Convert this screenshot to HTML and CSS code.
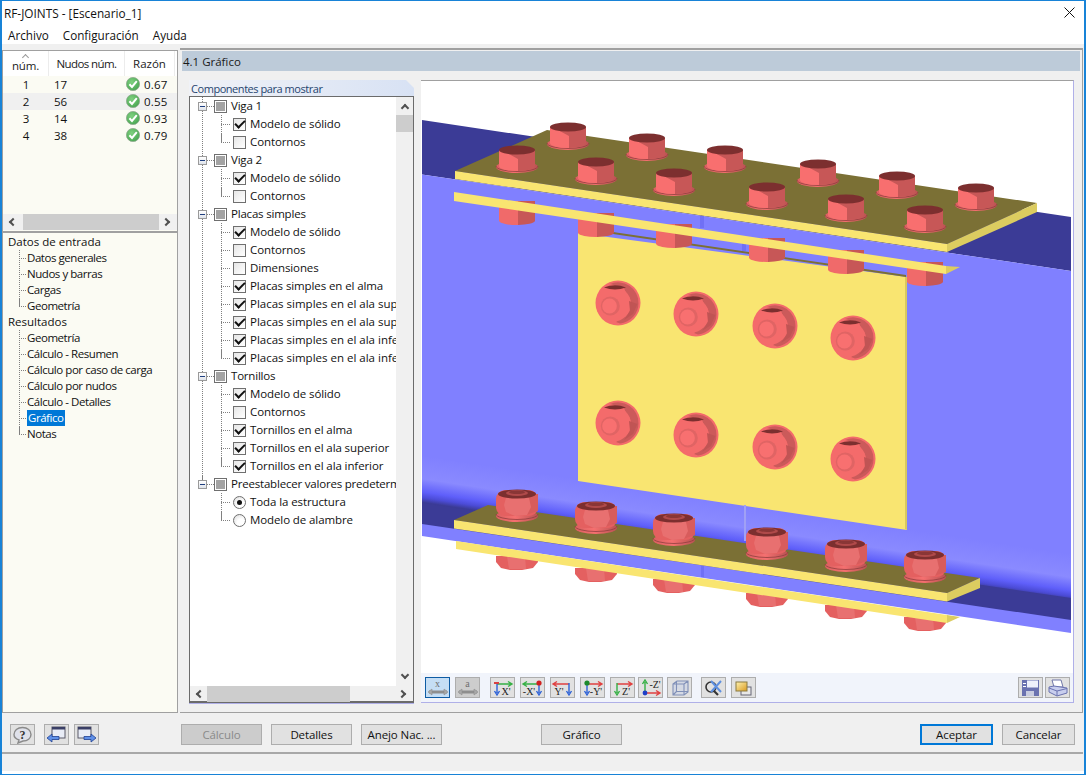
FILE: index.html
```html
<!DOCTYPE html>
<html lang="es">
<head>
<meta charset="utf-8">
<title>RF-JOINTS - [Escenario_1]</title>
<link rel="stylesheet" href="styles.css">
</head>
<body>
<svg class="defs" width="0" height="0">
  <defs>
    <linearGradient id="washer" x1="0" x2="1" y1="0" y2="0">
      <stop offset="0" stop-color="#d95f5f"/><stop offset=".45" stop-color="#f57070"/><stop offset="1" stop-color="#b95252"/>
    </linearGradient>
    <linearGradient id="webshade" gradientUnits="userSpaceOnUse" x1="750" y1="505" x2="743" y2="551">
      <stop offset="0" stop-color="#8080ff"/><stop offset=".5" stop-color="#8a8aff"/><stop offset=".78" stop-color="#5f5ffa"/><stop offset=".9" stop-color="#4c4cd8"/><stop offset="1" stop-color="#3b3b96"/>
    </linearGradient>
    <radialGradient id="okball" cx=".4" cy=".35" r=".8">
      <stop offset="0" stop-color="#7fd07f"/><stop offset="1" stop-color="#3f9f4a"/>
    </radialGradient>
    <linearGradient id="gold" x1="0" x2="1" y1="0" y2="1">
      <stop offset="0" stop-color="#fff3b0"/><stop offset="1" stop-color="#d99a20"/>
    </linearGradient>
    <g id="ok">
      <circle cx="7" cy="7" r="6.6" fill="url(#okball)" stroke="#8fa98f" stroke-width=".8"/>
      <path d="M3.4 7.2 6 10 10.800 4.200" fill="none" stroke="#fff" stroke-width="2"/>
    </g>
    <g id="bolt">
      <ellipse cx="0" cy="17" rx="21" ry="6" fill="url(#washer)"/>
      <path d="M-21 16A21 5.500 0 0 0 21 16" fill="none" stroke="#8f3f3f" stroke-width=".8"/>
      <path d="M-18 0V16A18 5 0 0 0 1 21V0Z" fill="#f86f6f"/>
      <path d="M1 0V21A18 5 0 0 0 18 16V0Z" fill="#c75757"/>
      <path d="M-10 3 1 9V3Z" fill="#c75757"/>
      <ellipse cx="0" cy="0" rx="18" ry="4.600" fill="#7c2f2f"/>
    </g>
    <g id="stub">
      <path d="M-18 -24V-4A18 4.500 0 0 0 1 0V-24Z" fill="#f06a6a"/>
      <path d="M1 -24V0A18 4.500 0 0 0 18 -4V-24Z" fill="#c75757"/>
    </g>
    <g id="nut">
      <ellipse cx="0" cy="27" rx="21" ry="6" fill="url(#washer)"/>
      <path d="M-21 25A21 5.500 0 0 0 21 25" fill="none" stroke="#8f3f3f" stroke-width=".8"/>
      <rect x="-21" y="1" width="42" height="26" rx="9" fill="#e46060"/>
      <path d="M9 5H21V22L9 26Z" fill="#d85c5c"/>
      <path d="M-11 9 1 6 12 9 14 18 10 26 -2 27 -11 23 -13 16Z" fill="#e87070"/>
      <ellipse cx="0" cy="5" rx="19" ry="4.600" fill="#7c2f2f"/>
      <ellipse cx="0" cy="4" rx="11" ry="3" fill="#b04a4a"/>
      <ellipse cx="0" cy="3.200" rx="8" ry="1.800" fill="#8a3636"/>
    </g>
    <g id="nutstub">
      <path d="M-21 -14H21V-8L16 -2 5 0H-7L-16 -2 -21 -8Z" fill="#e46060"/>
      <path d="M-10 -14H8L9 -1H-8Z" fill="#e87070"/>
    </g>
    <g id="front">
      <circle cx="0" cy="0" r="22.500" fill="#f46b6b"/>
      <path d="M-8 -19A20.500 20.500 0 0 1 20.500 0 20.500 20.500 0 0 1 2 20.500L-2 19 9 11 10 -5 6 -15Z" fill="#cb5a5a"/>
      <circle cx="-4.500" cy="1" r="17.500" fill="#f46b6b"/>
      <path d="M11 -2 19.500 1 15 11 6 17 12 8Z" fill="#c05454"/>
      <path d="M-14 -15.500Q-3 -20 8 -15.500 -3 -11.500 -14 -15.500Z" fill="#7c2f2f"/>
      <circle cx="-7.700" cy="3" r="9.500" fill="#e06464"/>
      <circle cx="-8.500" cy="3" r="7.400" fill="#f87070"/>
    </g>
    <g id="dblarrow">
      <path d="M3 13H21" stroke="#8e8e8e" stroke-width="3"/>
      <path d="M6 10 2 13 6 16ZM18 10 22 13 18 16Z" fill="#a8a8a8" stroke="#8e8e8e" stroke-width=".6"/>
    </g>
  </defs>
</svg>

<div class="window">
  <header class="titlebar">
    <span class="title">RF-JOINTS - [Escenario_1]</span>
    <svg class="close" width="11" height="11" viewBox="0 0 11 11"><path d="M.5.5 10.500 10.500M10.500.5.5 10.500" stroke="#111" stroke-width="1"/></svg>
  </header>
  <nav class="menubar"><span>Archivo</span><span>Configuración</span><span>Ayuda</span></nav>

  <div class="app">
    <div class="workarea">
      <aside class="left">
        <section class="table-pane">
          <div class="t-head">
            <div class="th th-num"><span class="sort"></span>núm.</div>
            <div class="th th-node">Nudos núm.</div>
            <div class="th th-ratio">Razón</div>
          </div>
          <div class="t-rows">
            <div class="t-row"><span class="c-num">1</span><span class="c-node">17</span><svg class="okicon" width="14" height="14"><use href="#ok"/></svg><span class="c-val">0.67</span></div>
            <div class="t-row selected"><span class="c-num">2</span><span class="c-node">56</span><svg class="okicon" width="14" height="14"><use href="#ok"/></svg><span class="c-val">0.55</span></div>
            <div class="t-row"><span class="c-num">3</span><span class="c-node">14</span><svg class="okicon" width="14" height="14"><use href="#ok"/></svg><span class="c-val">0.93</span></div>
            <div class="t-row"><span class="c-num">4</span><span class="c-node">38</span><svg class="okicon" width="14" height="14"><use href="#ok"/></svg><span class="c-val">0.79</span></div>
          </div>
          <div class="hscroll hscroll-table">
            <span class="arrow a-left"></span><span class="thumb thumb-table"></span><span class="arrow a-right"></span>
          </div>
        </section>
        <section class="nav-pane">
          <div class="nav-root">Datos de entrada</div>
          <div class="nav-item">Datos generales</div>
          <div class="nav-item">Nudos y barras</div>
          <div class="nav-item">Cargas</div>
          <div class="nav-item last">Geometría</div>
          <div class="nav-root">Resultados</div>
          <div class="nav-item">Geometría</div>
          <div class="nav-item">Cálculo - Resumen</div>
          <div class="nav-item">Cálculo por caso de carga</div>
          <div class="nav-item">Cálculo por nudos</div>
          <div class="nav-item">Cálculo - Detalles</div>
          <div class="nav-item"><span class="nav-sel">Gráfico</span></div>
          <div class="nav-item last">Notas</div>
        </section>
      </aside>

      <main class="right">
        <div class="section-head">4.1 Gráfico</div>
        <div class="content">
          <div class="components">
            <div class="comp-label">Componentes para mostrar</div>
            <div class="comp-box">
              <div class="comp-top">
                <div class="tree">
                  <div class="g"><span class="exp"></span><span class="dots"></span><span class="cb grp"></span>Viga 1</div>
                  <div class="i"><span class="cb on"></span>Modelo de sólido</div>
                  <div class="i end"><span class="cb"></span>Contornos</div>
                  <div class="g"><span class="exp"></span><span class="dots"></span><span class="cb grp"></span>Viga 2</div>
                  <div class="i"><span class="cb on"></span>Modelo de sólido</div>
                  <div class="i end"><span class="cb"></span>Contornos</div>
                  <div class="g"><span class="exp"></span><span class="dots"></span><span class="cb grp"></span>Placas simples</div>
                  <div class="i"><span class="cb on"></span>Modelo de sólido</div>
                  <div class="i"><span class="cb"></span>Contornos</div>
                  <div class="i"><span class="cb"></span>Dimensiones</div>
                  <div class="i"><span class="cb on"></span>Placas simples en el alma</div>
                  <div class="i wide"><span class="cb on"></span>Placas simples en el ala superior</div>
                  <div class="i wide"><span class="cb on"></span>Placas simples en el ala superior</div>
                  <div class="i wide"><span class="cb on"></span>Placas simples en el ala inferior</div>
                  <div class="i wide end"><span class="cb on"></span>Placas simples en el ala inferior</div>
                  <div class="g"><span class="exp"></span><span class="dots"></span><span class="cb grp"></span>Tornillos</div>
                  <div class="i"><span class="cb on"></span>Modelo de sólido</div>
                  <div class="i"><span class="cb"></span>Contornos</div>
                  <div class="i"><span class="cb on"></span>Tornillos en el alma</div>
                  <div class="i"><span class="cb on"></span>Tornillos en el ala superior</div>
                  <div class="i end"><span class="cb on"></span>Tornillos en el ala inferior</div>
                  <div class="g lastg"><span class="exp"></span><span class="dots"></span><span class="cb grp"></span>Preestablecer valores predeterminados</div>
                  <div class="i nov"><span class="rb on"></span>Toda la estructura</div>
                  <div class="i nov end"><span class="rb"></span>Modelo de alambre</div>
                </div>
                <div class="vscroll">
                  <span class="arrow a-up"></span><span class="vthumb"></span><span class="vspace"></span><span class="arrow a-down"></span>
                </div>
              </div>
              <div class="hscroll hscroll-tree">
                <span class="arrow a-left"></span><span class="thumb thumb-tree"></span><span class="arrow a-right"></span>
              </div>
            </div>
          </div>

          <div class="canvas">
            <svg class="scene" width="652" height="592" viewBox="421 81 652 592">
              <rect x="421" y="81" width="652" height="592" fill="#fff"/>
              <polygon points="422,120 1071,217 1071,271 422,174.500" fill="#3b3b96"/>
              <polygon points="422,174.500 1071,271 1071,625 422,530" fill="#8080ff"/>
              <polygon points="422,456 1071,553 1071,600 422,505" fill="url(#webshade)"/>
              <polygon points="422,503 1071,598 1071,621 422,525" fill="#3b3b96"/>
              <polygon points="422,524 1071,620 1071,633 422,536" fill="#8080ff"/>

              <polygon points="578,233 907,277 907,530 578,481" fill="#f9e571"/>
              <polygon points="905,277 907,277 907,530 905,529" fill="#d8c85e"/>
              <polygon points="613,232 906,275 906,277 613,234" fill="#7b7035"/>
              <rect x="700" y="216" width="4" height="12" fill="#7070f5"/>
              <rect x="742" y="243" width="4" height="8" fill="#7070f5"/>
              <rect x="744" y="505" width="2" height="36" fill="#a0a0f5"/>
              <rect x="701" y="566" width="3" height="11" fill="#7070f5"/>

              <use href="#stub" x="517" y="225"/>
              <use href="#stub" x="596" y="237"/>
              <use href="#stub" x="674" y="248"/>
              <use href="#stub" x="767" y="262"/>
              <use href="#stub" x="846" y="274"/>
              <use href="#stub" x="925" y="286"/>

              <polygon points="454,192 946,266 946,274 454,201" fill="#f9e571"/>
              <polygon points="946,266 960,267 946,274" fill="#dccc60"/>

              <polygon points="455,171 547,130 1037,203 947,244" fill="#7b7035"/>
              <polygon points="455,171 947,244 947,252 455,179" fill="#f9e571"/>
              <polygon points="947,244 1037,203 1037,212 947,252" fill="#dccc60"/>

              <use href="#bolt" x="568" y="127"/>
              <use href="#bolt" x="647" y="138"/>
              <use href="#bolt" x="725" y="150"/>
              <use href="#bolt" x="818" y="164"/>
              <use href="#bolt" x="897" y="176"/>
              <use href="#bolt" x="976" y="188"/>
              <use href="#bolt" x="517" y="150"/>
              <use href="#bolt" x="596" y="162"/>
              <use href="#bolt" x="674" y="173"/>
              <use href="#bolt" x="767" y="187"/>
              <use href="#bolt" x="846" y="199"/>
              <use href="#bolt" x="925" y="210"/>

              <use href="#front" x="618" y="303"/>
              <use href="#front" x="696" y="314"/>
              <use href="#front" x="775" y="326"/>
              <use href="#front" x="853" y="338"/>
              <use href="#front" x="618" y="423"/>
              <use href="#front" x="696" y="435"/>
              <use href="#front" x="775" y="447"/>
              <use href="#front" x="853" y="459"/>

              <use href="#nutstub" x="517" y="570"/>
              <use href="#nutstub" x="596" y="582"/>
              <use href="#nutstub" x="674" y="593"/>
              <use href="#nutstub" x="767" y="607"/>
              <use href="#nutstub" x="846" y="619"/>
              <use href="#nutstub" x="925" y="631"/>

              <polygon points="456,541 947,615 947,623 456,549" fill="#f9e571"/>
              <polygon points="947,615 960,617 947,623" fill="#dccc60"/>

              <polygon points="454,520 488,505 980,578 947,593" fill="#7b7035"/>
              <polygon points="454,520 947,593 947,601.500 454,528.500" fill="#f9e571"/>
              <polygon points="947,593 980,578 980,588 947,601.500" fill="#dccc60"/>

              <use href="#nut" x="517" y="489"/>
              <use href="#nut" x="596" y="501"/>
              <use href="#nut" x="674" y="513"/>
              <use href="#nut" x="767" y="527"/>
              <use href="#nut" x="846" y="539"/>
              <use href="#nut" x="925" y="550"/>
            </svg>

            <div class="viewbar">
              <button class="tb active"><svg width="23" height="18" viewBox="0 0 23 18"><text x="11.500" y="8" class="ic-t">x</text><use href="#dblarrow"/></svg></button>
              <button class="tb disabled"><svg width="23" height="18" viewBox="0 0 23 18"><text x="11.500" y="8" class="ic-t">a</text><use href="#dblarrow"/></svg></button>
              <button class="tb sep"><svg width="23" height="18" viewBox="0 0 23 18"><path d="M6 5H20M17 2.500 21 5 17 7.500" fill="none" stroke="#35b045" stroke-width="1.400"/><path d="M6 4V14M3.500 12 6 16 8.500 12" fill="none" stroke="#2d62d8" stroke-width="1.400"/><rect x="3" y="3" width="5" height="2" fill="#d84040"/><text x="15" y="16" class="ic-a">X'</text></svg></button>
              <button class="tb"><svg width="23" height="18" viewBox="0 0 23 18"><path d="M17 5H3M6 2.500 2 5 6 7.500" fill="none" stroke="#35b045" stroke-width="1.400"/><path d="M18 5V14M15.500 12 18 16 20.500 12" fill="none" stroke="#2d62d8" stroke-width="1.400"/><circle cx="18" cy="4" r="2.600" fill="#d02020"/><text x="8" y="16" class="ic-a">-X'</text></svg></button>
              <button class="tb"><svg width="23" height="18" viewBox="0 0 23 18"><path d="M18 5H3M6 2.500 2 5 6 7.500" fill="none" stroke="#e04040" stroke-width="1.400"/><path d="M18 4V14M15.500 12 18 16 20.500 12" fill="none" stroke="#2d62d8" stroke-width="1.400"/><text x="8" y="16" class="ic-a">Y'</text></svg></button>
              <button class="tb"><svg width="23" height="18" viewBox="0 0 23 18"><path d="M6 5H20M17 2.500 21 5 17 7.500" fill="none" stroke="#e04040" stroke-width="1.400"/><path d="M6 5V14M3.500 12 6 16 8.500 12" fill="none" stroke="#2d62d8" stroke-width="1.400"/><circle cx="6" cy="4" r="2.600" fill="#1c8a2c"/><text x="15" y="16" class="ic-a">-Y'</text></svg></button>
              <button class="tb"><svg width="23" height="18" viewBox="0 0 23 18"><path d="M6 5H20M17 2.500 21 5 17 7.500" fill="none" stroke="#e04040" stroke-width="1.400"/><path d="M6 4V14M3.500 12 6 16 8.500 12" fill="none" stroke="#35b045" stroke-width="1.400"/><text x="15" y="16" class="ic-a">Z'</text></svg></button>
              <button class="tb narrow"><svg width="23" height="18" viewBox="0 0 23 18"><path d="M6 14V3M3.500 5 6 1 8.500 5" fill="none" stroke="#35b045" stroke-width="1.400"/><path d="M6 14H20M17 11.500 21 14 17 16.500" fill="none" stroke="#e04040" stroke-width="1.400"/><circle cx="6" cy="14" r="2.400" fill="#1f3fc8"/><text x="16" y="9" class="ic-a">-Z'</text></svg></button>
              <button class="tb"><svg width="23" height="18" viewBox="0 0 23 18"><path d="M5 5 9 2H20V13L16 16H5ZM5 5H16V16M16 5 20 2M8.500 2.500V12.500H19.500M8.500 12.500 5 16" fill="#c8d2e8" fill-opacity=".5" stroke="#8090b8" stroke-width="1.100"/></svg></button>
              <button class="tb sep2"><svg width="23" height="18" viewBox="0 0 23 18"><circle cx="9" cy="8" r="5" fill="none" stroke="#333" stroke-width="1.600"/><path d="M12 12 16 16" stroke="#333" stroke-width="2.200"/><path d="M9 2 19 13M19 2 9 13" stroke="#5f90e0" stroke-width="2"/></svg></button>
              <button class="tb"><svg width="23" height="18" viewBox="0 0 23 18"><rect x="9" y="8" width="10" height="8" fill="#e8e8e8" stroke="#667"/><rect x="4" y="3" width="11" height="9" fill="url(#gold)" stroke="#8a7a40"/></svg></button>
              <button class="tb push"><svg width="23" height="18" viewBox="0 0 23 18"><path d="M3 1H20V17H3Z" fill="#6a72b0"/><rect x="8" y="1.500" width="11" height="7" fill="#eef1fb"/><rect x="7" y="12" width="8" height="5" fill="#c8cce0"/><rect x="4" y="4" width="3" height="1" fill="#fff"/><rect x="4" y="7" width="3" height="1" fill="#fff"/></svg></button>
              <button class="tb"><svg width="23" height="18" viewBox="0 0 23 18"><path d="M6 1H15L17 8H8Z" fill="#fff" stroke="#7077a8"/><path d="M3 8 8 7 21 9V14L11 17 3 13Z" fill="#c8ceee" stroke="#6a72b0"/><path d="M3 9 11 12 21 9.500M11 12V17" fill="none" stroke="#6a72b0"/></svg></button>
            </div>
          </div>
        </div>
      </main>
    </div>

    <footer class="footer">
      <button class="ib ib-first"><svg width="23" height="18" viewBox="0 0 23 18"><path d="M11.500 1.500C16.500 1.500 20 4.500 20 8.500S16.500 15 12 15L7 17 8 14C5 13 3 11 3 8.500 3 4.500 6.500 1.500 11.500 1.500Z" fill="#dfe1ea" stroke="#8a8a8a" stroke-width="1.400"/><text x="11.500" y="12.500" class="ic-q">?</text></svg></button>
      <button class="ib ib-second"><svg width="23" height="18" viewBox="0 0 23 18"><rect x="7" y="1" width="13" height="11" fill="#e8ecf6" stroke="#5a5a68"/><rect x="7" y="1" width="13" height="2.500" fill="#3a3f66"/><path d="M2 12 7 8V10.500H14V13.500H7V16Z" fill="#5f90e8" stroke="#1f3f90" stroke-width=".8"/></svg></button>
      <button class="ib"><svg width="23" height="18" viewBox="0 0 23 18"><rect x="3" y="1" width="13" height="11" fill="#e8ecf6" stroke="#5a5a68"/><rect x="3" y="1" width="13" height="2.500" fill="#3a3f66"/><path d="M21 12 16 8V10.500H9V13.500H16V16Z" fill="#5f90e8" stroke="#1f3f90" stroke-width=".8"/></svg></button>
      <button class="btn btn-disabled btn-calc">Cálculo</button>
      <button class="btn">Detalles</button>
      <button class="btn">Anejo Nac. ...</button>
      <button class="btn btn-graf">Gráfico</button>
      <button class="btn btn-sm btn-ok">Aceptar</button>
      <button class="btn btn-sm">Cancelar</button>
    </footer>
    <div class="statusbar"></div>
  </div>
</div>
</body>
</html>
```

FILE: styles.css
```css
* { box-sizing: border-box; }
html, body { margin: 0; padding: 0; background: #fff; }
body { font: 11.5px/16px "Open Sans", "Noto Sans", sans-serif; color: #111; }
.defs { display: block; height: 0; }

.window {
  width: 1086px; height: 775px;
  display: flex; flex-direction: column;
  border: 1px solid #1883d7;
  border-right-width: 2px;
  border-left-width: 2px;
  background: #fff;
  overflow: hidden;
}

.titlebar { height: 22px; flex: none; display: flex; align-items: center; justify-content: space-between; padding: 2px 9px 0 2px; }
.title { font-size: 11.8px; }
.close { display: block; margin-top: -1px; }
.menubar { height: 21px; flex: none; display: flex; gap: 14px; padding: 4px 0 0 6px; font-size: 11.7px; }

.app { flex: 1; margin-bottom: 3px; background: #f0f0f0; display: flex; flex-direction: column; min-height: 0; }
.workarea { height: 669px; flex: none; display: flex; }

/* left column */
.left { width: 176px; margin: 6px 0 0 0; display: flex; flex-direction: column; border: 1px solid #a0a0a0; flex: none; }
.table-pane { height: 182px; flex: none; background: #fbfbf3; display: flex; flex-direction: column; border-bottom: 2px solid #a0a0a0; }
.t-head { height: 25px; flex: none; display: grid; grid-template-columns: 46px 76px 50px; background: #fff; }
.th { display: flex; align-items: center; justify-content: center; border-right: 1px solid #ececec; color: #222; padding-top: 1px; }
.th-num { flex-direction: column; line-height: 13px; padding-top: 0; letter-spacing: -.2px; }
.th-node { letter-spacing: -.6px; }
.sort { width: 5px; height: 5px; border-left: 1px solid #999; border-top: 1px solid #999; transform: rotate(45deg); margin-bottom: -1px; }
.t-rows { flex: 1; }
.t-row { height: 17px; display: flex; align-items: center; }
.t-row.selected { background: #f0f0f0; }
.c-num { width: 46px; text-align: center; }
.c-node { width: 77px; padding-left: 5px; }
.okicon { display: block; width: 14px; height: 14px; margin-top: -2px; }
.c-val { padding-left: 4px; letter-spacing: .2px; }

.hscroll { flex: none; display: flex; align-items: center; background: #f0f0f0; height: 16px; }
.hscroll-table { margin-bottom: 1px; }
.arrow { width: 6px; height: 6px; border: solid #505050; border-width: 2px 0 0 2px; flex: none; }
.a-left { transform: rotate(-45deg); margin: 0 7px 0 7px; }
.a-right { transform: rotate(135deg); margin: 0 8px 0 auto; }
.a-up { transform: rotate(45deg); margin: 8px 0 0 0; }
.a-down { transform: rotate(225deg); margin: 0 0 8px 0; }
.thumb { height: 16px; background: #cdcdcd; flex: none; }
.thumb-table { width: 136px; }
.thumb-tree { width: 143px; }

.nav-pane { flex: 1; background: #fbfbf3; padding: 1px 0 0 5px; }
.nav-root, .nav-item { height: 16px; white-space: nowrap; }
.nav-item {
  padding-left: 19px;
  letter-spacing: -.45px;
  background-image:
    linear-gradient(#808080 50%, transparent 50%),
    repeating-linear-gradient(to right, #808080 0 1px, transparent 1px 2px);
  background-size: 1px 2px, 8px 1px;
  background-repeat: repeat-y, no-repeat;
  background-position: 11px 0, 11px 8px;
}
.nav-item.last {
  background-image:
    linear-gradient(#808080, #808080),
    repeating-linear-gradient(to right, #808080 0 1px, transparent 1px 2px);
  background-size: 1px 8px, 8px 1px;
  background-repeat: no-repeat, no-repeat;
}
.nav-sel { display: inline-block; background: #0078d7; color: #fff; padding: 0 1px; height: 16px; }

/* right column */
.right { flex: 1; margin: 4px 1px 0 2px; border-top: 2px solid #a0a0a0; border-right: 1px solid #a0a0a0; border-bottom: 1px solid #a0a0a0; display: flex; flex-direction: column; min-width: 0; }
.section-head { height: 20px; flex: none; margin: 1px 2px 0 2px; background: #bdcbd9; font-size: 11.5px; line-height: 21px; padding-left: 1px; color: #1a1a1a; }
.content { flex: 1; display: flex; padding: 9px 0 9px 9px; min-height: 0; }

.components { width: 225px; flex: none; display: flex; flex-direction: column; }
.comp-label { height: 16px; flex: none; background: linear-gradient(to right, #f0f2f7, #d8e2f4); padding-left: 2px; line-height: 17px; color: #26456f; font-size: 11px; letter-spacing: -.45px; clip-path: polygon(0 0, 217px 0, 100% 8px, 100% 100%, 0 100%); }
.comp-box { flex: 1; display: flex; flex-direction: column; border: 1px solid #6b6b6b; border-bottom: 2px solid #6b6b6b; box-shadow: 0 1px 0 #b0b0e8; background: #f0f0f0; min-height: 0; }
.comp-top { flex: 1; display: flex; min-height: 0; }
.tree { width: 206px; flex: none; background: #fff; overflow: hidden; padding-left: 8px; letter-spacing: -.1px; }
.g, .i { height: 18px; display: flex; align-items: center; white-space: nowrap; }
.g { background-image: linear-gradient(#808080 50%, transparent 50%); background-size: 1px 2px; background-repeat: repeat-y; background-position: 4px 0; letter-spacing: -.2px; }
.g.lastg { background-repeat: no-repeat; background-size: 1px 9px; background-image: linear-gradient(#808080, #808080); }
.i {
  padding-left: 35px;
  background-image:
    linear-gradient(#808080 50%, transparent 50%),
    linear-gradient(#808080 50%, transparent 50%),
    repeating-linear-gradient(to right, #808080 0 1px, transparent 1px 2px);
  background-size: 1px 2px, 1px 2px, 10px 1px;
  background-repeat: repeat-y, repeat-y, no-repeat;
  background-position: 4px 0, 23px 0, 23px 9px;
}
.i.wide { letter-spacing: 0; }
.i.end {
  background-repeat: repeat-y, no-repeat, no-repeat;
  background-size: 1px 2px, 1px 9px, 10px 1px;
  background-image:
    linear-gradient(#808080 50%, transparent 50%),
    linear-gradient(#808080, #808080),
    repeating-linear-gradient(to right, #808080 0 1px, transparent 1px 2px);
}
.i.nov { background-position: -10px 0, 23px 0, 23px 9px; }

.exp { width: 9px; height: 9px; flex: none; border: 1px solid #9a9a9a; background: linear-gradient(#fff, #dfe3ea); display: flex; align-items: center; justify-content: center; }
.exp::after { content: ""; width: 5px; height: 1px; background: #1f3f7f; }
.dots { width: 7px; height: 1px; flex: none; background: repeating-linear-gradient(to right, #808080 0 1px, transparent 1px 2px); }
.cb { width: 13px; height: 13px; flex: none; margin-right: 4px; border: 1px solid #6f6f6f; background: linear-gradient(135deg, #e6e6e6, #fff); display: flex; align-items: center; justify-content: center; }
.cb.on::after { content: ""; width: 4px; height: 8px; border: solid #111; border-width: 0 2px 2px 0; transform: rotate(45deg); margin-top: -2px; }
.cb.grp { background: #fff; }
.cb.grp::after { content: ""; width: 9px; height: 9px; background: #a3a3a3; }
.rb { width: 13px; height: 13px; flex: none; margin-right: 4px; border-radius: 50%; border: 1px solid #6f6f6f; background: radial-gradient(circle at 65% 70%, #fff 35%, #d8d8d8); display: flex; align-items: center; justify-content: center; }
.rb.on::after { content: ""; width: 5px; height: 5px; border-radius: 50%; background: #111; }

.vscroll { flex: 1; display: flex; flex-direction: column; align-items: center; background: #f0f0f0; }
.vthumb { width: 100%; height: 17px; background: #cdcdcd; margin-top: 4px; flex: none; }
.vspace { flex: 1; }
.hscroll-tree { height: 15px; flex: none; }
.hscroll-tree .a-left { margin-right: 4px; }

.canvas { width: 653px; flex: none; margin-left: 7px; display: flex; flex-direction: column; border-top: 1px solid #a0a0a0; border-right: 1px solid #b0b0e8; border-bottom: 1px solid #b0b0e8; background: #f1f4fb; min-height: 0; }
.scene { display: block; flex: none; }
.viewbar { flex: 1; display: flex; align-items: center; padding: 0 3px 0 4px; gap: 5px; }
.tb { width: 25px; height: 21px; flex: none; padding: 0; border: 1px solid #adadad; background: #e1e1e1; display: flex; align-items: center; justify-content: center; }
.tb svg, .ib svg { display: block; flex: none; }
.tb.active { background: #c5def5; border-color: #0e5ca4; }
.tb.disabled { background: #cdcdcd; }
.tb.sep { margin-left: 5px; }
.tb.narrow { margin-left: -2px; margin-right: -1px; }
.tb.sep2 { margin-left: 4px; }
.tb.push { margin-left: auto; margin-right: -3px; }
.ic-t { font: 10px "Liberation Serif", serif; fill: #6f6f6f; text-anchor: middle; }
.ic-a { font: 10px "Liberation Serif", serif; fill: #222; text-anchor: middle; }
.ic-q { font: bold 12px "Liberation Serif", serif; fill: #333; text-anchor: middle; }

/* footer */
.footer { height: 39px; flex: none; display: flex; align-items: flex-start; padding: 11px 0 0 8px; }
.ib { width: 25px; height: 21px; flex: none; padding: 0; border: 1px solid #adadad; background: #e1e1e1; display: flex; align-items: center; justify-content: center; margin-right: 5px; }
.ib-first { margin-right: 9px; }
.btn { width: 81px; height: 21px; flex: none; padding: 0; border: 1px solid #adadad; background: #e1e1e1; font: 11.5px/17px "Open Sans", "Noto Sans", sans-serif; letter-spacing: -.1px; color: #111; margin-right: 9px; }
.btn-disabled { background: #cccccc; color: #8a8a8a; }
.btn-calc { margin-left: 77px; }
.btn-graf { margin-left: 90px; margin-right: 0; }
.btn-sm { width: 73px; }
.btn-ok { margin-left: 298px; border: 2px solid #0078d7; }

.statusbar { flex: 1; border-top: 2px solid #a8a8a8; margin-right: 1px; }
```
